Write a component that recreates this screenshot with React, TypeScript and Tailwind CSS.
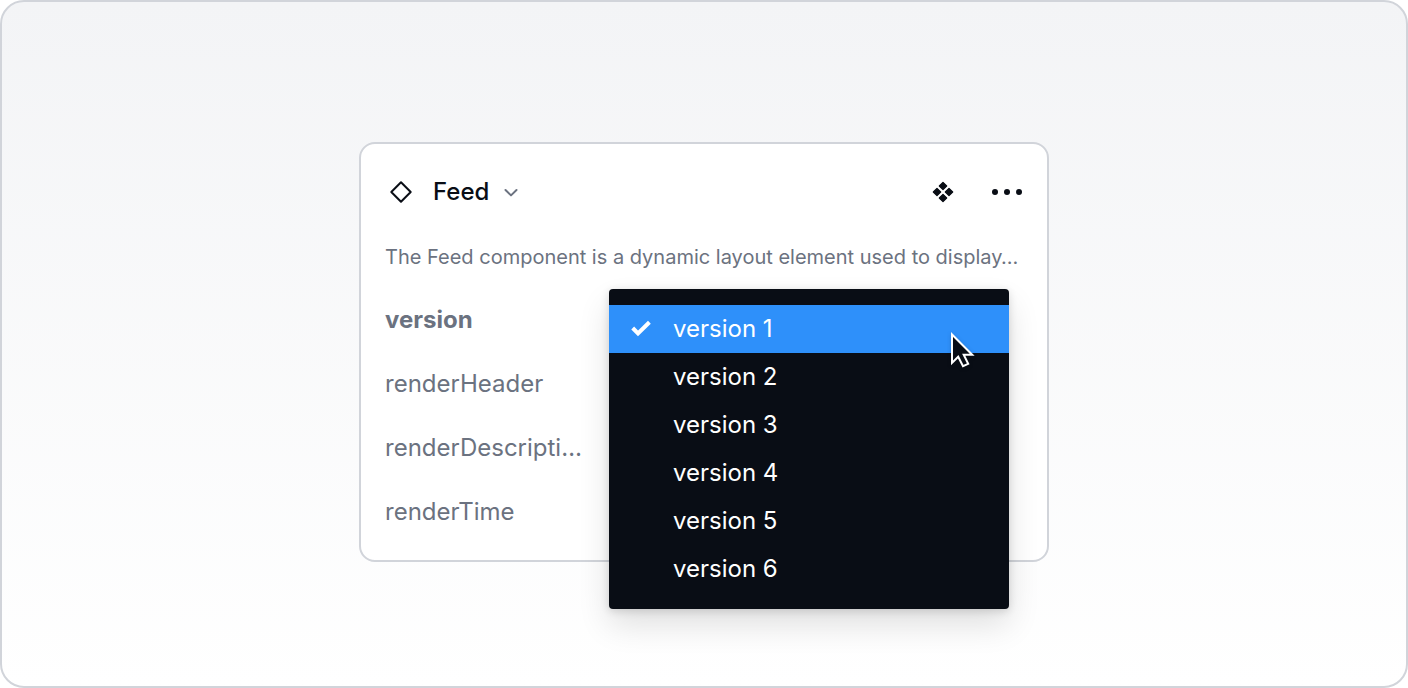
import React, { useState } from 'react';

const VERSIONS = ['version 1', 'version 2', 'version 3', 'version 4', 'version 5', 'version 6'];
const PROPS = ['renderHeader', 'renderDescripti…', 'renderTime'];

const DiamondIcon = () => (
  <svg className="w-6 h-6" viewBox="0 0 24 24" fill="none" stroke="currentColor" strokeWidth="2">
    <path d="M12 2.3 21.7 12 12 21.7 2.3 12Z" strokeLinejoin="round" />
  </svg>
);

const ChevronIcon = () => (
  <svg className="w-4 h-4" viewBox="0 0 16 16" fill="none" stroke="currentColor" strokeWidth="2">
    <path d="m2.5 6 5.5 5.4L13.5 6" strokeLinecap="round" strokeLinejoin="round" />
  </svg>
);

const ComponentIcon = () => (
  <svg className="w-6 h-6" viewBox="0 0 24 24" fill="currentColor" stroke="currentColor" strokeWidth="1.2" strokeLinejoin="round">
    <path d="M12 2.3 15.7 6 12 9.7 8.3 6Z" />
    <path d="M18 8.3 21.7 12 18 15.7 14.3 12Z" />
    <path d="M12 14.3 15.7 18 12 21.7 8.3 18Z" />
    <path d="M6 8.3 9.7 12 6 15.7 2.3 12Z" />
  </svg>
);

const DotsIcon = () => (
  <svg className="w-8 h-8" viewBox="0 0 32 32" fill="currentColor">
    <circle cx="4" cy="16" r="3" />
    <circle cx="16" cy="16" r="3" />
    <circle cx="28" cy="16" r="3" />
  </svg>
);

const CheckIcon = () => (
  <svg className="w-6 h-6" viewBox="0 0 24 24" fill="none" stroke="currentColor" strokeWidth="4">
    <path d="m3.7 11 5.3 5.4L20.4 5.2" />
  </svg>
);

const CursorIcon = () => (
  <svg className="w-7 h-10 drop-shadow-sm" viewBox="0 0 28 40" fill="#090d15" stroke="#fff" strokeWidth="2">
    <path d="M3 5.5v28.4l6.2-6.2 4.8 9.5 5.2-2.4-4.5-9.1h8.5Z" />
  </svg>
);

export default function App() {
  const [selected, setSelected] = useState('version 1');

  return (
    <main className="min-h-screen flex items-center justify-center pt-4 border-2 border-[#d1d4da] rounded-3xl bg-linear-to-b from-[#f3f4f6] to-white font-['Inter',sans-serif] text-2xl text-[#6b7280]">
      <section className="w-full max-w-[690px] pb-4 bg-white border-2 border-[#d1d4da] rounded-2xl">
        {/* Header */}
        <header className="flex items-center justify-between h-24 px-6 text-[#090d15]">
          <button type="button" className="flex items-center pl-1">
            <DiamondIcon />
            <span className="ml-5 mr-3.5 font-medium">Feed</span>
            <span className="text-[#6b7280]"><ChevronIcon /></span>
          </button>
          <div className="flex items-center gap-9">
            <button type="button" aria-label="Component">
              <ComponentIcon />
            </button>
            <button type="button" aria-label="More">
              <DotsIcon />
            </button>
          </div>
        </header>

        <p className="px-6 pt-0.5 pb-4 text-xl leading-[30px]">
          The Feed component is a dynamic layout element used to display…
        </p>

        {/* Version row with its open menu */}
        <div className="relative flex items-center h-16 px-6">
          <span id="version-label" className="font-bold">version</span>
          <div
            role="listbox"
            aria-labelledby="version-label"
            className="absolute top-px right-[38px] w-[400px] py-4 rounded-sm bg-[#090d15] text-white shadow-[0_2px_8px_rgba(0,0,0,0.14),0_16px_32px_rgba(0,0,0,0.12)]"
          >
            {VERSIONS.map(version => (
              <button
                key={version}
                type="button"
                role="option"
                aria-selected={selected === version}
                onClick={() => setSelected(version)}
                className={`flex items-center w-full h-12 px-5 gap-5 ${
                  selected === version ? 'bg-[#2e90fa]' : 'hover:bg-white/10'
                }`}
              >
                <span className="w-6">{selected === version && <CheckIcon />}</span>
                {version}
              </button>
            ))}
            <div className="absolute top-10 right-8 pointer-events-none">
              <CursorIcon />
            </div>
          </div>
        </div>

        {/* Remaining props */}
        {PROPS.map(name => (
          <div key={name} className="flex items-center h-16 px-6">
            {name}
          </div>
        ))}
      </section>
    </main>
  );
}
